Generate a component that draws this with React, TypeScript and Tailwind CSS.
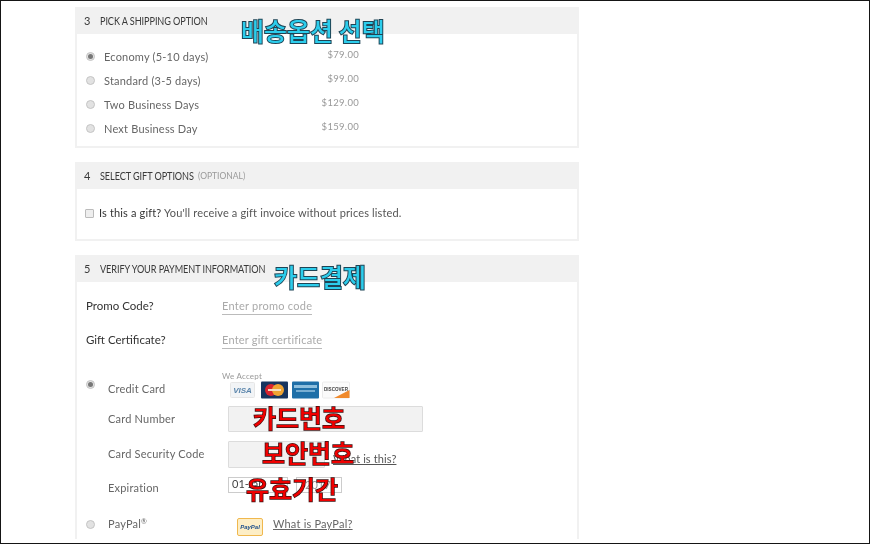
const FONT = "font-['Lato','Open_Sans',sans-serif]";
const KOREAN =
  "absolute whitespace-nowrap font-['Noto_Sans_CJK_KR',sans-serif] text-[25px] leading-[30px] font-medium [paint-order:stroke_fill]";
const CYAN = "text-[#2ccdec] [-webkit-text-stroke:2px_#1f4455]";
const RED = "text-[#f00000] font-bold [-webkit-text-stroke:1.5px_#3a1010]";

const shipping = [
  { label: "Economy (5-10 days)", price: "$79.00", checked: true },
  { label: "Standard (3-5 days)", price: "$99.00" },
  { label: "Two Business Days", price: "$129.00" },
  { label: "Next Business Day", price: "$159.00" },
];

function Radio({ checked }: { checked?: boolean }) {
  return (
    <span className="flex h-[9px] w-[9px] shrink-0 items-center justify-center rounded-full border border-[#c4c4c4] bg-[#e2e2e2]">
      {checked && <span className="h-[5px] w-[5px] rounded-full bg-[#777]" />}
    </span>
  );
}

function Header({ n, title, note }: { n: number; title: string; note?: string }) {
  return (
    <div className="flex h-[27px] items-center bg-[#f1f1f1] pl-[7px] pt-[1px] text-[11px] text-[#3a3a3a]">
      <span className="w-[16px]">{n}</span>
      {/* the original heading is a condensed face, none is installed */}
      <span className="origin-left scale-x-[0.83] whitespace-nowrap tracking-[-0.1px]">{title}</span>
      {note && <span className="ml-[-15px] mt-[1px] text-[8.5px] text-[#999]">{note}</span>}
    </div>
  );
}

function CardLogos() {
  return (
    <svg width="121" height="18" viewBox="0 0 121 18" className="ml-[8px] block">
      <rect x="0.5" y="1.5" width="24" height="15" rx="1" fill="#f2f4f6" stroke="#e6e6e6" />
      <text x="12.5" y="12" textAnchor="middle" fontFamily="Liberation Sans" fontSize="8" fontWeight="700" fontStyle="italic" fill="#5c86ac">
        VISA
      </text>
      <rect x="31" y="0.5" width="27" height="17" rx="1" fill="#17345f" />
      <circle cx="41" cy="9" r="6" fill="#d9232e" />
      <circle cx="48" cy="9" r="6" fill="#f0a432" />
      <rect x="38" y="8" width="13" height="2" fill="#f6dcc0" />
      <rect x="62" y="0.5" width="27" height="17" rx="1" fill="#1f6fa8" />
      <rect x="64" y="4" width="23" height="3" fill="#8fbfdd" />
      <rect x="66" y="9" width="19" height="2" fill="#79aed2" />
      <rect x="92.5" y="1" width="27" height="16" rx="1" fill="#fbfbfb" stroke="#ececec" />
      <path d="M104 17 L119.5 9 L119.5 17 Z" fill="#f08a2c" />
      <text x="106" y="10" textAnchor="middle" fontFamily="Liberation Sans" fontSize="4.6" fontWeight="700" fill="#444">
        DISCOVER
      </text>
    </svg>
  );
}

function PayPalLogo() {
  return (
    <span className="mt-[6px] flex h-[18px] w-[26px] items-center justify-center rounded-[2px] border border-[#f0b84e] bg-[#fdeec6] font-['Liberation_Sans',sans-serif] text-[6px] font-bold italic text-[#1d4f8c]">
      PayPal
    </span>
  );
}

export default function App() {
  return (
    <div className="h-[544px] w-[870px] overflow-hidden border border-[#151515] bg-white">
      <div className={`relative h-full pl-[74px] pt-[6px] blur-[0.3px] ${FONT}`}>
        <div className="flex w-[504px] flex-col gap-[14px]">
          <section className="h-[141px] border-2 border-t-0 border-[#f1f1f1]">
            <Header n={3} title="PICK A SHIPPING OPTION" />
            <div className="flex flex-col pt-[11px]">
              {shipping.map((s) => (
                <div key={s.label} className="flex h-[24px] items-center text-[11px] text-[#666]">
                  <span className="ml-[9px] -mt-[2px]">
                    <Radio checked={s.checked} />
                  </span>
                  <span className="ml-[9px] w-[202px] tracking-[0.2px]">{s.label}</span>
                  <span className="-mt-[3px] w-[53px] text-right text-[9.5px] tracking-[0.3px] text-[#999]">{s.price}</span>
                </div>
              ))}
            </div>
          </section>

          <section className="h-[79px] border-2 border-t-0 border-[#f1f1f1]">
            <Header n={4} title="SELECT GIFT OPTIONS" note="(OPTIONAL)" />
            <div className="flex items-center gap-[5px] pl-[8px] pt-[16px] text-[11px] tracking-[0.15px] text-[#555]">
              <span className="h-[9px] w-[9px] rounded-[1px] border border-[#bbb] bg-[#eee]" />
              <span>
                <span className="text-[#333]">Is this a gift?</span> You'll receive a gift invoice without prices listed.
              </span>
            </div>
          </section>

          <section className="border-x-2 border-[#f1f1f1]">
            <Header n={5} title="VERIFY YOUR PAYMENT INFORMATION" />
            <div className="flex h-[48px] items-center pl-[9px] text-[11.5px] text-[#333]">
              <span className="w-[136px]">Promo Code?</span>
              <span className="mt-[1px] border-b border-[#bbb] text-[11px] tracking-[0.25px] text-[#aaa]">Enter promo code</span>
            </div>
            <div className="-mt-[7px] flex h-[34px] items-center pl-[9px] text-[11.5px] text-[#333]">
              <span className="w-[136px]">Gift Certificate?</span>
              <span className="mt-[1px] border-b border-[#bbb] text-[11px] tracking-[0.2px] text-[#aaa]">Enter gift certificate</span>
            </div>

            <div className="mt-[12px] flex h-[36px] text-[11px] text-[#666]">
              <span className="ml-[9px] mt-[11px]">
                <Radio checked />
              </span>
              <span className="ml-[13px] mt-[12px] w-[114px] tracking-[0.2px]">Credit Card</span>
              <div className="flex flex-col">
                <span className="mt-[3px] text-[8px] leading-[9px] tracking-[0.2px] text-[#999]">We Accept</span>
                <CardLogos />
              </div>
            </div>

            <div className="-mt-[4px] flex h-[36px] items-center text-[11px] text-[#666]">
              <span className="ml-[31px] w-[120px] tracking-[0.2px]">Card Number</span>
              <span className="h-[26px] w-[195px] rounded-[1px] border border-[#dcdcdc] bg-[#f2f2f2]" />
            </div>

            <div className="flex h-[35px] items-center text-[11px] text-[#666]">
              <span className="ml-[31px] w-[120px] tracking-[0.2px]">Card Security Code</span>
              <span className="h-[27px] w-[97px] rounded-[1px] border border-[#dcdcdc] bg-[#f2f2f2]" />
              <span className="ml-[8px] mt-[9px] tracking-[0.1px] text-[#555] underline">What is this?</span>
            </div>

            <div className="flex h-[33px] items-center text-[11px] text-[#666]">
              <span className="ml-[31px] w-[120px] tracking-[0.2px]">Expiration</span>
              <span className="-mt-[8px] flex h-[16px] w-[60px] items-center border border-[#ccc] bg-white pl-[3px] text-[#444]">01-Jan</span>
              <span className="-mt-[8px] ml-[8px] h-[16px] w-[46px] border border-[#ccc] bg-white pl-[8px] leading-[14px] text-[#999]">2017</span>
            </div>

            <div className="mt-[4px] flex h-[30px] items-center text-[11px] text-[#666]">
              <span className="ml-[9px]">
                <Radio />
              </span>
              <span className="ml-[13px] w-[129px] tracking-[0.2px]">
                PayPal<span className="align-top text-[7px]">®</span>
              </span>
              <PayPalLogo />
              <span className="ml-[10px] tracking-[0.2px] underline">What is PayPal?</span>
            </div>
          </section>
        </div>

        <span className={`${KOREAN} ${CYAN} left-[240px] top-[14px]`}>배송옵션 선택</span>
        <span className={`${KOREAN} ${CYAN} left-[273px] top-[260px]`}>카드결제</span>
        <span className={`${KOREAN} ${RED} left-[252px] top-[401px]`}>카드번호</span>
        <span className={`${KOREAN} ${RED} left-[261px] top-[436px]`}>보안번호</span>
        <span className={`${KOREAN} ${RED} left-[245px] top-[472px]`}>유효기간</span>
      </div>
    </div>
  );
}
